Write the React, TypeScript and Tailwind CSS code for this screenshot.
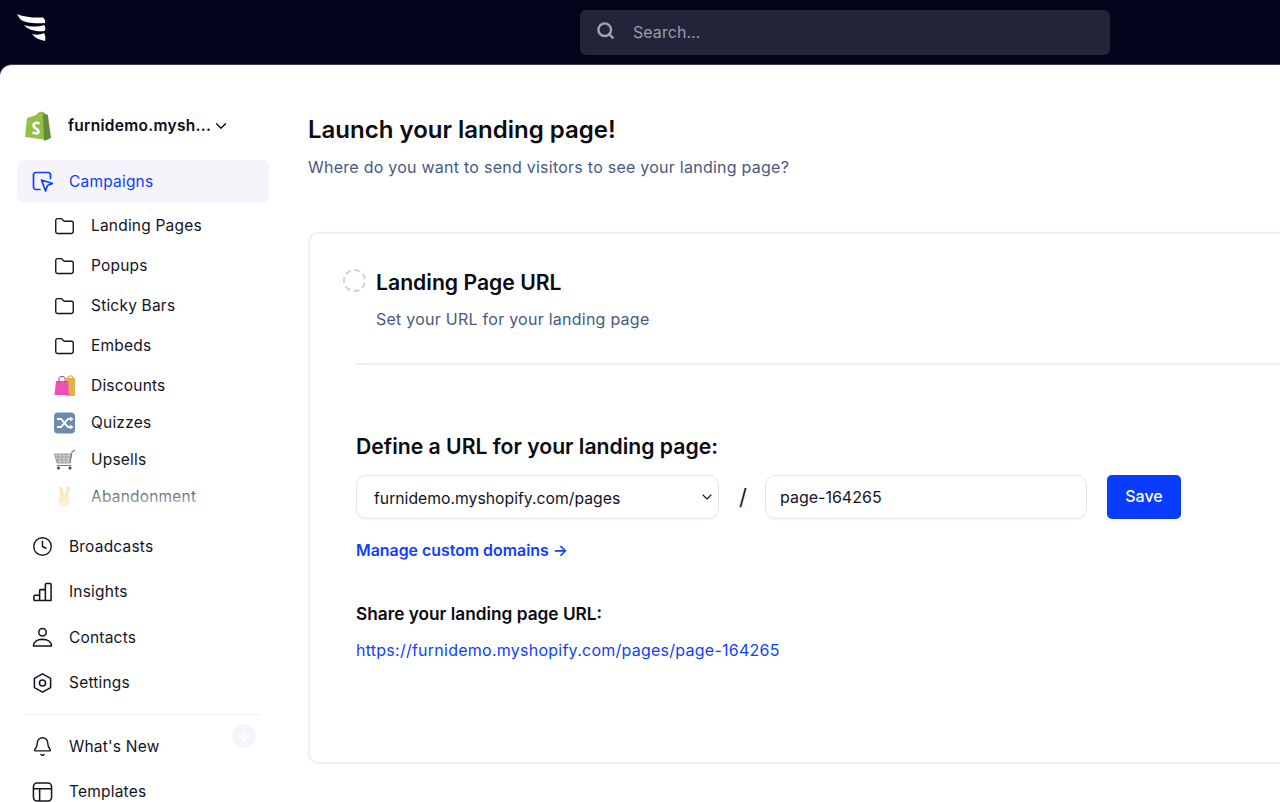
import { ArrowDown, Bell, ChevronDown, Clock, Folder, Search } from 'lucide-react';
import type { ReactNode } from 'react';

const FONT = "font-['Inter','Liberation_Sans',sans-serif]";

function Logo() {
  return (
    <svg width="30" height="28" viewBox="0 0 30 28" fill="#fff">
      <path d="M1 0 C8 3 19 4 27 3.5 C29 5 29.5 7 29 9 C20 10 8 9 4 5 Z" />
      <path d="M8 11 C14 13 22 13 28 11 C30 13 29.5 16 28.5 17 C20 18 12 16 8 11 Z" />
      <path d="M16 20 C20 21 24 21 28 19 C30 22 29.5 25 29 27 C24 26 19 24 16 20 Z" />
    </svg>
  );
}

function ShopifyBag() {
  return (
    <svg width="28" height="31" viewBox="0 0 28 31">
      <path d="M3 7 L12 4 C14 1 17 0 19 1 L21 3 L24 29 L1 26 Z" fill="#95bf47" />
      <path d="M19 1 L21 3 L23 3.5 C24 3.6 24 4 24 5 L27 27 L20 30 Z" fill="#5e8e3e" />
      <path d="M15.5 12.5 C13 11 9.5 12 9.5 14.6 C9.5 17.6 14.5 17.6 14.5 20.4 C14.5 22.8 11 23 8.5 21.2" fill="none" stroke="#fff" strokeWidth="2.6" />
    </svg>
  );
}

function CampaignIcon() {
  return (
    <svg width="22" height="22" viewBox="0 0 22 22" fill="none" stroke="#0e3fff" strokeWidth="1.7" strokeLinecap="round" strokeLinejoin="round">
      <path d="M8 18.5 H4 a2.5 2.5 0 0 1 -2.5 -2.5 V4 A2.5 2.5 0 0 1 4 1.5 H16 A2.5 2.5 0 0 1 18.5 4 V7.5" />
      <path d="M9.5 9 L20.5 12.5 L15.5 14.5 L13.5 20 Z" />
    </svg>
  );
}

function InsightsIcon() {
  return (
    <svg width="22" height="22" viewBox="0 0 22 22" fill="none" stroke="#14141f" strokeWidth="1.6" strokeLinejoin="round">
      <path d="M2 20 H20 V3 a1 1 0 0 0 -1 -1 H15 a1 1 0 0 0 -1 1 V20" />
      <path d="M14 8.5 H9 a1 1 0 0 0 -1 1 V20" />
      <path d="M8 14.5 H3 a1 1 0 0 0 -1 1 V20" />
    </svg>
  );
}

function ContactIcon() {
  return (
    <svg width="22" height="22" viewBox="0 0 22 22" fill="none" stroke="#14141f" strokeWidth="1.6" strokeLinejoin="round">
      <circle cx="11" cy="6" r="3.9" />
      <path d="M1.5 20.5 C1.5 16 5.5 13.5 11 13.5 C16.5 13.5 20.5 16 20.5 20.5 Z" />
    </svg>
  );
}

function SettingsIcon() {
  return (
    <svg width="22" height="22" viewBox="0 0 22 22" fill="none" stroke="#14141f" strokeWidth="1.6" strokeLinejoin="round">
      <path d="M11 1.5 L19.5 6.2 V15.8 L11 20.5 L2.5 15.8 V6.2 Z" />
      <circle cx="11" cy="11" r="3.2" />
    </svg>
  );
}

function TemplateIcon() {
  return (
    <svg width="22" height="22" viewBox="0 0 22 22" fill="none" stroke="#14141f" strokeWidth="1.6">
      <rect x="1.5" y="1.5" width="19" height="19" rx="4" />
      <path d="M1.5 7.5 H20.5 M8 7.5 V20.5" />
    </svg>
  );
}

function BagsEmoji() {
  return (
    <svg width="22" height="22" viewBox="0 0 22 22">
      <rect x="12" y="3" width="9" height="18" fill="#e0b04a" />
      <path d="M14 4 V2 C14 0.5 19 0.5 19 2 V4" fill="none" stroke="#c9973a" strokeWidth="1" />
      <path d="M2 6 H14 L15 20 H0.5 Z" fill="#ef4fb6" />
      <path d="M5 8 V3 C5 1 11 1 11 3 V8" fill="none" stroke="#b93a8c" strokeWidth="1" />
    </svg>
  );
}

function ShuffleEmoji() {
  return (
    <svg width="22" height="22" viewBox="0 0 22 22">
      <rect width="21" height="21" y="0.5" rx="4" fill="#6c8bb0" />
      <path d="M3 7 H7 L14 15 H17 M3 15 H7 L14 7 H17" fill="none" stroke="#fff" strokeWidth="1.8" />
      <path d="M16 4.5 L19.5 7 L16 9.5 Z M16 12.5 L19.5 15 L16 17.5 Z" fill="#fff" />
    </svg>
  );
}

function CartEmoji() {
  return (
    <svg width="22" height="22" viewBox="0 0 22 22">
      <path d="M0.5 5 H17 L16 14 H3 Z" fill="#cfd0d4" stroke="#8b8c91" strokeWidth="0.8" />
      <path d="M4 5 V14 M8 5 V14 M12 5 V14 M1 8 H17 M2 11 H16" stroke="#8b8c91" strokeWidth="0.6" />
      <path d="M16 14 L18 3 L21 1 M3 16.5 H17" fill="none" stroke="#77787d" strokeWidth="1.1" />
      <circle cx="4.5" cy="19" r="1.5" fill="#44454a" />
      <circle cx="16" cy="19" r="1.5" fill="#44454a" />
    </svg>
  );
}

function VictoryEmoji() {
  return (
    <svg width="22" height="22" viewBox="0 0 22 22">
      <path d="M6 11 L5.5 1.5 C5.5 0.5 8 0.5 8.2 1.5 L10.5 9 L13.5 1 C14 0 16.5 0.8 16 2 L14 11 L15.5 13 C16 18 14 21 10 21 C6 21 3.5 18 4 13 Z" fill="#f8dc9c" />
    </svg>
  );
}

const EMOJI_ITEMS: { label: string; icon: ReactNode }[] = [
  { label: 'Discounts', icon: <BagsEmoji /> },
  { label: 'Quizzes', icon: <ShuffleEmoji /> },
  { label: 'Upsells', icon: <CartEmoji /> },
  { label: 'Abandonment', icon: <VictoryEmoji /> },
];

function NavItem({ icon, label }: { icon: ReactNode; label: string }) {
  return (
    <div className="flex h-[45.4px] items-center gap-[16px] pl-[32px] text-[15.5px] tracking-[0.2px] text-[#14141f]">
      <span className="flex w-[21px] justify-center">{icon}</span>
      {label}
    </div>
  );
}

function SubItem({ icon, label, h }: { icon: ReactNode; label: string; h: string }) {
  return (
    <div className={`flex ${h} items-center gap-[15px] pl-[54px] text-[15.5px] tracking-[0.2px] text-[#14141f]`}>
      <span className="flex w-[22px] justify-center">{icon}</span>
      {label}
    </div>
  );
}

function Sidebar() {
  return (
    <aside className="relative w-[285px] shrink-0 pt-[44px]">
      <div className="flex h-[34px] items-center pl-[24px] text-[15.5px] font-semibold tracking-[0.3px] text-[#0b0b14]">
        <ShopifyBag />
        <span className="ml-[16px]">furnidemo.mysh...</span>
        <ChevronDown size={18} strokeWidth={1.8} className="ml-[1px]" />
      </div>
      <div className="ml-[17px] mt-[17px] flex h-[43px] w-[252px] items-center gap-[15px] rounded-l-lg rounded-r-md bg-[#f5f4fb] pl-[15px] text-[15.5px] tracking-[0.2px] text-[#0e3fff]">
        <CampaignIcon />
        Campaigns
      </div>
      <div className="relative mt-[3px] h-[309px] overflow-hidden">
        {['Landing Pages', 'Popups', 'Sticky Bars', 'Embeds'].map((label) => (
          <SubItem key={label} label={label} h="h-10" icon={<Folder size={21} strokeWidth={1.6} className="-translate-x-px" />} />
        ))}
        <div className="pt-[1.5px]">
          {EMOJI_ITEMS.map((item) => (
            <SubItem key={item.label} h="h-[37px]" {...item} />
          ))}
        </div>
        <div className="absolute inset-x-0 bottom-0 h-[36px] bg-gradient-to-b from-white/0 to-white/90" />
      </div>
      <div className="mt-[9px]">
        <NavItem label="Broadcasts" icon={<Clock size={21} strokeWidth={1.6} />} />
        <NavItem label="Insights" icon={<InsightsIcon />} />
        <NavItem label="Contacts" icon={<ContactIcon />} />
        <NavItem label="Settings" icon={<SettingsIcon />} />
      </div>
      <div className="ml-[24px] mt-[8px] mb-[9px] h-px w-[236px] bg-[#f2f1f8]" />
      <NavItem label="What's New" icon={<Bell size={21} strokeWidth={1.6} />} />
      <NavItem label="Templates" icon={<TemplateIcon />} />
      <div className="absolute left-[232px] top-[659px] flex h-6 w-6 items-center justify-center rounded-full bg-[#f6f5fc]">
        <ArrowDown size={14} strokeWidth={3} className="text-white" />
      </div>
    </aside>
  );
}

export default function App() {
  return (
    <div className={`${FONT} h-[802px] overflow-hidden bg-[#02041c]`}>
      <header className="relative flex h-[64px] items-start pt-[10px]">
        <div className="absolute left-[16px] top-[14px]">
          <Logo />
        </div>
        <div className="ml-[580px] flex h-[44.5px] w-[529.5px] items-center rounded-md bg-[#22253a] pl-[16px] text-[16px] tracking-[0.05px] text-[#9a9ca8]">
          <Search size={19} strokeWidth={3} className="-mt-[4px] text-[#a3a5b1]" />
          <span className="ml-[18px]">Search...</span>
        </div>
      </header>
      <div className="flex h-[738px] overflow-hidden rounded-tl-[12px] border-t border-[#3a3b48] bg-white">
        <Sidebar />
        <main className="min-w-0 flex-1 pl-[23px] pt-[50px]">
          <h1 className="text-[24px] font-semibold leading-[30px] text-[#0b0b14]">Launch your landing page!</h1>
          <p className="mt-[10px] text-[16px] leading-[24px] tracking-[0.25px] text-[#475a80]">
            Where do you want to send visitors to see your landing page?
          </p>
          <section className="mt-[53px] h-[532px] w-[1100px] rounded-[10px] border-2 border-[#eeeef6] pl-[46px] pt-[33px]">
            <div className="relative pl-[20px]">
              <span className="absolute -left-[13px] top-[2px] h-[23px] w-[23px] rounded-full border-2 border-dashed border-[#d4d4d8]" />
              <h2 className="text-[21.2px] font-semibold leading-[30px] text-[#0b0b14]">Landing Page URL</h2>
              <p className="mt-[10px] text-[16px] leading-[24px] tracking-[0.25px] text-[#475a80]">Set your URL for your landing page</p>
            </div>
            <div className="mt-[32px] h-0.5 bg-[#eeeef6]" />
            <h3 className="mt-[66px] text-[21.2px] font-semibold leading-[30px] text-[#0b0b14]">Define a URL for your landing page:</h3>
            <div className="mt-[14px] flex items-start">
              <div className="flex h-[44px] w-[363px] items-center justify-between rounded-[10px] border border-[#e5e5ec] pl-[17px] pr-[3px] text-[15.75px] text-[#14141f] shadow-[0_1px_2px_rgba(0,0,0,0.04)]">
                <span className="mt-[3px] block h-[19px] overflow-hidden leading-[20px]">furnidemo.myshopify.com/pages</span>
                <ChevronDown size={16} strokeWidth={1.7} />
              </div>
              <span className="ml-[20px] mt-[6px] w-[26px] text-[22px] text-[#14141f]">/</span>
              <div className="flex h-[44px] w-[322px] items-center rounded-[10px] border border-[#e5e5ec] pl-[14px] text-[16px] text-[#14141f] shadow-[0_1px_2px_rgba(0,0,0,0.04)]">
                page-164265
              </div>
              <button type="button" className="ml-[20px] h-[43.5px] w-[74px] rounded-[5px] bg-[#0a3cff] pb-[1px] text-[16px] font-medium text-white">
                Save
              </button>
            </div>
            <a className="mt-[20px] block text-[15.9px] font-semibold leading-[24px] text-[#0e3fff]">Manage custom domains →</a>
            <p className="mt-[39px] text-[17.25px] font-semibold leading-[24px] text-[#0b0b14]">Share your landing page URL:</p>
            <a className="mt-[12px] block text-[16px] leading-[24px] tracking-[0.25px] text-[#0e3fff]">https://furnidemo.myshopify.com/pages/page-164265</a>
          </section>
        </main>
      </div>
    </div>
  );
}
